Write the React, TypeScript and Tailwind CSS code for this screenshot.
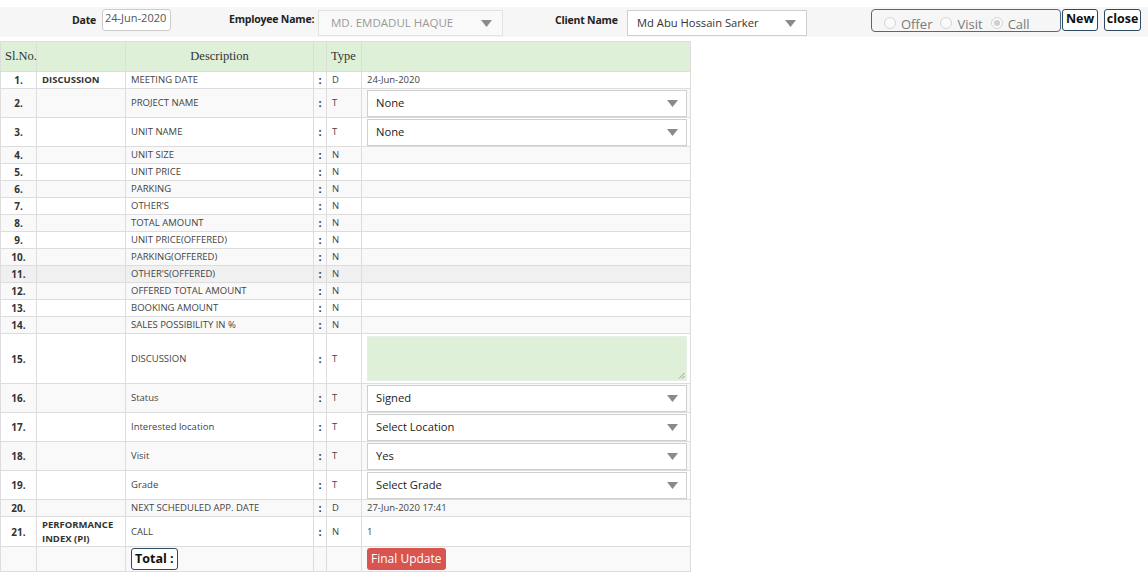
interface Row {
  n: number,
  group?: string,
  desc: string,
  type: string,
  value?: string,
  select?: string,
  textarea?: boolean,
  h: string
}

const rows: Row[] = [
  { n: 1, group: 'DISCUSSION', desc: 'MEETING DATE', type: 'D', value: '24-Jun-2020', h: 'h-[17px]' },
  { n: 2, desc: 'PROJECT NAME', type: 'T', select: 'None', h: 'h-[29px]' },
  { n: 3, desc: 'UNIT NAME', type: 'T', select: 'None', h: 'h-[29px]' },
  { n: 4, desc: 'UNIT SIZE', type: 'N', h: 'h-[17px]' },
  { n: 5, desc: 'UNIT PRICE', type: 'N', h: 'h-[17px]' },
  { n: 6, desc: 'PARKING', type: 'N', h: 'h-[17px]' },
  { n: 7, desc: "OTHER'S", type: 'N', h: 'h-[17px]' },
  { n: 8, desc: 'TOTAL AMOUNT', type: 'N', h: 'h-[17px]' },
  { n: 9, desc: 'UNIT PRICE(OFFERED)', type: 'N', h: 'h-[17px]' },
  { n: 10, desc: 'PARKING(OFFERED)', type: 'N', h: 'h-[17px]' },
  { n: 11, desc: "OTHER'S(OFFERED)", type: 'N', h: 'h-[17px]' },
  { n: 12, desc: 'OFFERED TOTAL AMOUNT', type: 'N', h: 'h-[17px]' },
  { n: 13, desc: 'BOOKING AMOUNT', type: 'N', h: 'h-[17px]' },
  { n: 14, desc: 'SALES POSSIBILITY IN %', type: 'N', h: 'h-[17px]' },
  { n: 15, desc: 'DISCUSSION', type: 'T', textarea: true, h: 'h-[50px]' },
  { n: 16, desc: 'Status', type: 'T', select: 'Signed', h: 'h-[29px]' },
  { n: 17, desc: 'Interested location', type: 'T', select: 'Select Location', h: 'h-[29px]' },
  { n: 18, desc: 'Visit', type: 'T', select: 'Yes', h: 'h-[29px]' },
  { n: 19, desc: 'Grade', type: 'T', select: 'Select Grade', h: 'h-[29px]' },
  { n: 20, desc: 'NEXT SCHEDULED APP. DATE', type: 'D', value: '27-Jun-2020 17:41', h: 'h-[17px]' },
  { n: 21, group: 'PERFORMANCE INDEX (PI)', desc: 'CALL', type: 'N', value: '1', h: 'h-[30px]' }
]

function Arrow() {
  return (
    <svg width="11" height="7" viewBox="0 0 11 7" className="shrink-0">
      <path d="M0 0 L11 0 L5.5 7 Z" fill="#8a8a8a" />
    </svg>
  )
}

function FakeSelect({ text, className }: { text: string, className: string }) {
  return (
    <div className={`flex items-center justify-between shrink-0 border border-[#cfcfcf] ${className}`}>
      <span className="whitespace-nowrap">{text}</span>
      <Arrow />
    </div>
  )
}

function Radio({ label, checked }: { label: string, checked?: boolean }) {
  return (
    <span className="flex items-center">
      <span className="w-[12px] h-[12px] rounded-full border border-[#d4d4d4] bg-[#fafafa] flex items-center justify-center">
        {checked && <span className="w-[6px] h-[6px] rounded-full bg-[#cfcfcf]" />}
      </span>
      <span className="ml-[5px] mt-[3px] text-[13px] text-[#7a7a7a]">{label}</span>
    </span>
  )
}

export default function App() {
  const cell = 'border border-[#dddddd] px-[5px] py-0 leading-[12px] align-middle'
  const label = 'shrink-0 text-[10.5px] tracking-[-0.2px] font-bold text-[#222]'

  return (
    <div className="w-[1148px] h-[586px] bg-white text-[#444] font-['Open_Sans','Noto_Sans',sans-serif] overflow-hidden">
      <div className="mt-[7px] h-[30px] bg-[#f6f6f6] flex items-start whitespace-nowrap">
        <span className={`ml-[72px] mt-[6px] w-[23px] ${label}`}>Date</span>
        <div className="ml-[7px] mt-[2px] shrink-0 w-[69px] h-[22px] border border-[#cccccc] rounded-[3px] bg-white px-[2px] text-[11px] leading-[16px] text-[#555]">
          24-Jun-2020
        </div>
        <span className={`ml-[58px] mt-[5px] w-[85px] ${label}`}>Employee Name:</span>
        <FakeSelect
          text="MD. EMDADUL HAQUE"
          className="ml-[4px] mt-[3px] w-[185px] h-[26px] bg-[#f9f9f9] border-[#e2e2e2] pl-[12px] pr-[10px] text-[11.5px] text-[#9a9a9a]"
        />
        <span className={`ml-[52px] mt-[6px] w-[62px] ${label}`}>Client Name</span>
        <FakeSelect
          text="Md Abu Hossain Sarker"
          className="ml-[10px] mt-[3px] w-[180px] h-[26px] bg-white pl-[9px] pr-[10px] text-[11.2px] text-[#333]"
        />
        <div className="ml-[64px] mt-[2px] shrink-0 w-[190px] h-[23px] border border-[#4c6a86] rounded-[4px] flex items-center gap-[8px] pl-[12px] pt-[5px]">
          <Radio label="Offer" />
          <Radio label="Visit" />
          <Radio label="Call" checked />
        </div>
        <button className="ml-[1px] mt-[2px] shrink-0 w-[36px] h-[22px] border border-[#2d4a63] rounded-[3px] bg-white text-[12.5px] font-bold text-[#111] leading-none pb-[2px]">
          New
        </button>
        <button className="ml-[6px] mt-[2px] shrink-0 w-[37px] h-[22px] border border-[#2d4a63] rounded-[3px] bg-white text-[12.5px] font-bold text-[#111] leading-none pb-[2px]">
          close
        </button>
      </div>

      <table className="mt-[4px] w-[690px] table-fixed border-collapse text-[9.5px]">
        <colgroup>
          <col className="w-[36px]" />
          <col className="w-[89px]" />
          <col className="w-[188px]" />
          <col className="w-[13px]" />
          <col className="w-[35px]" />
          <col className="w-[329px]" />
        </colgroup>
        <tbody>
          <tr className="h-[30px] bg-[#dff0d8] font-['Liberation_Serif',serif] text-[12.5px] text-[#333]">
            <td className="border border-[#dddddd] pl-[4px]">Sl.No.</td>
            <td className="border border-[#dddddd]"></td>
            <td className="border border-[#dddddd] text-center">Description</td>
            <td className="border border-[#dddddd]"></td>
            <td className="border border-[#dddddd] pl-[4px]">Type</td>
            <td className="border border-[#dddddd]"></td>
          </tr>
          {rows.map((row) => {
            const bg = row.n === 11 ? 'bg-[#f0f0f0]' : row.n % 2 === 0 ? 'bg-[#f9f9f9]' : 'bg-white'
            return (
              <tr key={row.n} className={`${row.h} ${bg}`}>
                <td className={`${cell} text-center font-bold text-[10px] text-[#333]`}>{row.n}.</td>
                <td className={`${cell} font-bold text-[#333] leading-[14px]`}>{row.group}</td>
                <td className={cell}>{row.desc}</td>
                <td className="border border-[#dddddd] p-0 leading-[12px] text-center font-bold text-[#333] text-[11px]">:</td>
                <td className={cell}>{row.type}</td>
                <td className="border border-[#dddddd] pl-[5px] pr-[4px] py-0 leading-[12px] align-middle text-[#444]">
                  {row.value}
                  {row.select && (
                    <FakeSelect
                      text={row.select}
                      className="w-[320px] h-[27px] bg-white pl-[8px] pr-[8px] text-[11.2px] leading-[16px] text-[#222]"
                    />
                  )}
                  {row.textarea && (
                    <div className="relative w-[320px] h-[45px] bg-[#dff0d8] border border-[#e8efe4]">
                      <svg width="7" height="7" viewBox="0 0 7 7" className="absolute right-[1px] bottom-[1px]">
                        <path d="M6.5 1 L1 6.5 M6.5 4 L4 6.5" stroke="#888" strokeWidth="0.8" />
                      </svg>
                    </div>
                  )}
                </td>
              </tr>
            )
          })}
          <tr className="h-[25px] bg-[#f9f9f9]">
            <td className={cell}></td>
            <td className={cell}></td>
            <td className={cell}>
              <span className="inline-flex items-center h-[22px] px-[3px] border border-[#2d4a63] rounded-[3px] bg-white text-[12.5px] font-bold text-[#111]">
                Total :
              </span>
            </td>
            <td className="border border-[#dddddd]"></td>
            <td className={cell}></td>
            <td className="border border-[#dddddd] pl-[5px] py-0">
              <span className="inline-flex items-center h-[22px] px-[4px] rounded-[3px] bg-[#d9534f] text-[12px] text-white">
                Final Update
              </span>
            </td>
          </tr>
        </tbody>
      </table>
    </div>
  )
}
